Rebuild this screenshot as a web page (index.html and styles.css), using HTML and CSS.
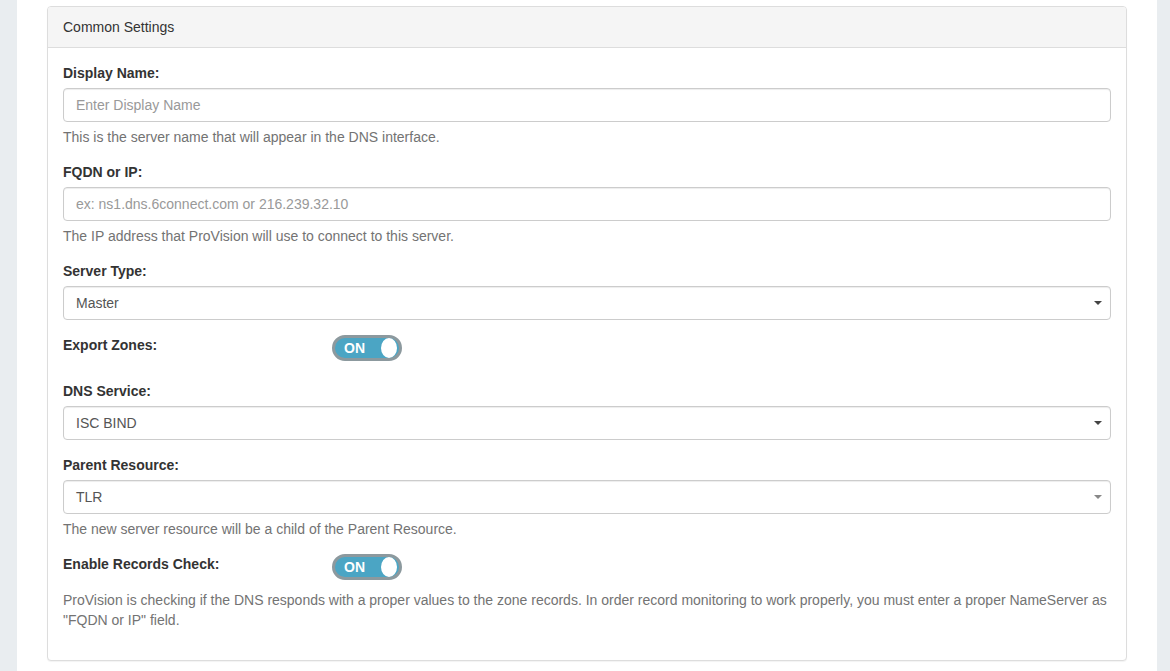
FILE: index.html
```html
<!DOCTYPE html>
<html lang="en">
<head>
  <meta charset="UTF-8">
  <title>Add DNS Server</title>
  <link rel="stylesheet" href="styles.css">
</head>
<body>

<div class="page">
  <div class="panel">
    <div class="panel-heading">Common Settings</div>
    <div class="panel-body">

      <div class="form-group">
        <label class="control-label">Display Name:</label>
        <input type="text" class="form-control" placeholder="Enter Display Name">
        <span class="help-block">This is the server name that will appear in the DNS interface.</span>
      </div>

      <div class="form-group">
        <label class="control-label">FQDN or IP:</label>
        <input type="text" class="form-control" placeholder="ex: ns1.dns.6connect.com or 216.239.32.10">
        <span class="help-block">The IP address that ProVision will use to connect to this server.</span>
      </div>

      <div class="form-group">
        <label class="control-label">Server Type:</label>
        <div class="select-box">
          <span>Master</span>
          <span class="caret"></span>
        </div>
      </div>

      <div class="form-group">
        <div class="switch-row">
          <label class="control-label">Export Zones:</label>
          <div class="switch"><span class="switch-on">ON</span><span class="switch-knob"></span></div>
        </div>
      </div>

      <div class="form-group">
        <label class="control-label">DNS Service:</label>
        <div class="select-box">
          <span>ISC BIND</span>
          <span class="caret"></span>
        </div>
      </div>

      <div class="form-group">
        <label class="control-label">Parent Resource:</label>
        <div class="select-box">
          <span>TLR</span>
          <span class="caret light"></span>
        </div>
        <span class="help-block">The new server resource will be a child of the Parent Resource.</span>
      </div>

      <div class="form-group">
        <div class="switch-row">
          <label class="control-label">Enable Records Check:</label>
          <div class="switch"><span class="switch-on">ON</span><span class="switch-knob"></span></div>
        </div>
        <span class="help-block">ProVision is checking if the DNS responds with a proper values to the zone records. In order record monitoring to work properly, you must enter a proper NameServer as "FQDN or IP" field.</span>
      </div>

    </div>
  </div>
</div>

</body>
</html>
```

FILE: styles.css
```css
* {
  box-sizing: border-box;
}
body {
  margin: 0;
  padding: 0;
  background: #e9edf0;
  font-family: "Liberation Sans", Arial, sans-serif;
  font-size: 14px;
  line-height: 20px;
  color: #333;
}
.page {
  background: #fff;
  margin: 0 13px 0 17px;
  padding: 6px 30px 10px 30px;
  min-height: 671px;
}
.panel {
  border: 1px solid #ddd;
  border-radius: 4px;
  box-shadow: 0 1px 1px rgba(0,0,0,0.05);
  background: #fff;
}
.panel-heading {
  background: #f5f5f5;
  border-bottom: 1px solid #ddd;
  border-radius: 3px 3px 0 0;
  padding: 10px 15px;
  color: #333;
}
.panel-body {
  padding: 15px;
}
.form-group {
  margin-bottom: 15px;
}
.control-label {
  display: inline-block;
  font-weight: bold;
  margin-bottom: 5px;
}
.form-control {
  display: block;
  width: 100%;
  height: 34px;
  padding: 6px 12px;
  font-family: inherit;
  font-size: 14px;
  color: #555;
  border: 1px solid #ccc;
  border-radius: 4px;
  box-shadow: inset 0 1px 1px rgba(0,0,0,0.075);
}
.form-control::placeholder {
  color: #999;
}
.help-block {
  display: block;
  margin-top: 5px;
  color: #737373;
}
.select-box {
  display: flex;
  align-items: center;
  justify-content: space-between;
  height: 34px;
  padding: 6px 8px 6px 12px;
  color: #555;
  border: 1px solid #ccc;
  border-radius: 4px;
  box-shadow: inset 0 1px 1px rgba(0,0,0,0.075);
}
.caret {
  width: 0;
  height: 0;
  border-left: 4px solid transparent;
  border-right: 4px solid transparent;
  border-top: 4px solid #444;
}
.caret.light {
  border-top-color: #888;
}
.switch-row {
  display: flex;
  height: 31px;
}
.switch-row .control-label {
  width: 269px;
  margin-bottom: 0;
}
.switch {
  display: flex;
  align-items: center;
  justify-content: space-between;
  width: 70px;
  height: 26px;
  background: #4ba5c4;
  border: 3px solid #8c999e;
  border-radius: 13px;
  padding: 0 2px 0 9px;
}
.switch-on {
  color: #fff;
  font-weight: bold;
  font-size: 14px;
  line-height: 20px;
}
.switch-knob {
  width: 16px;
  height: 20px;
  background: #fff;
  border-radius: 50%;
}
```
